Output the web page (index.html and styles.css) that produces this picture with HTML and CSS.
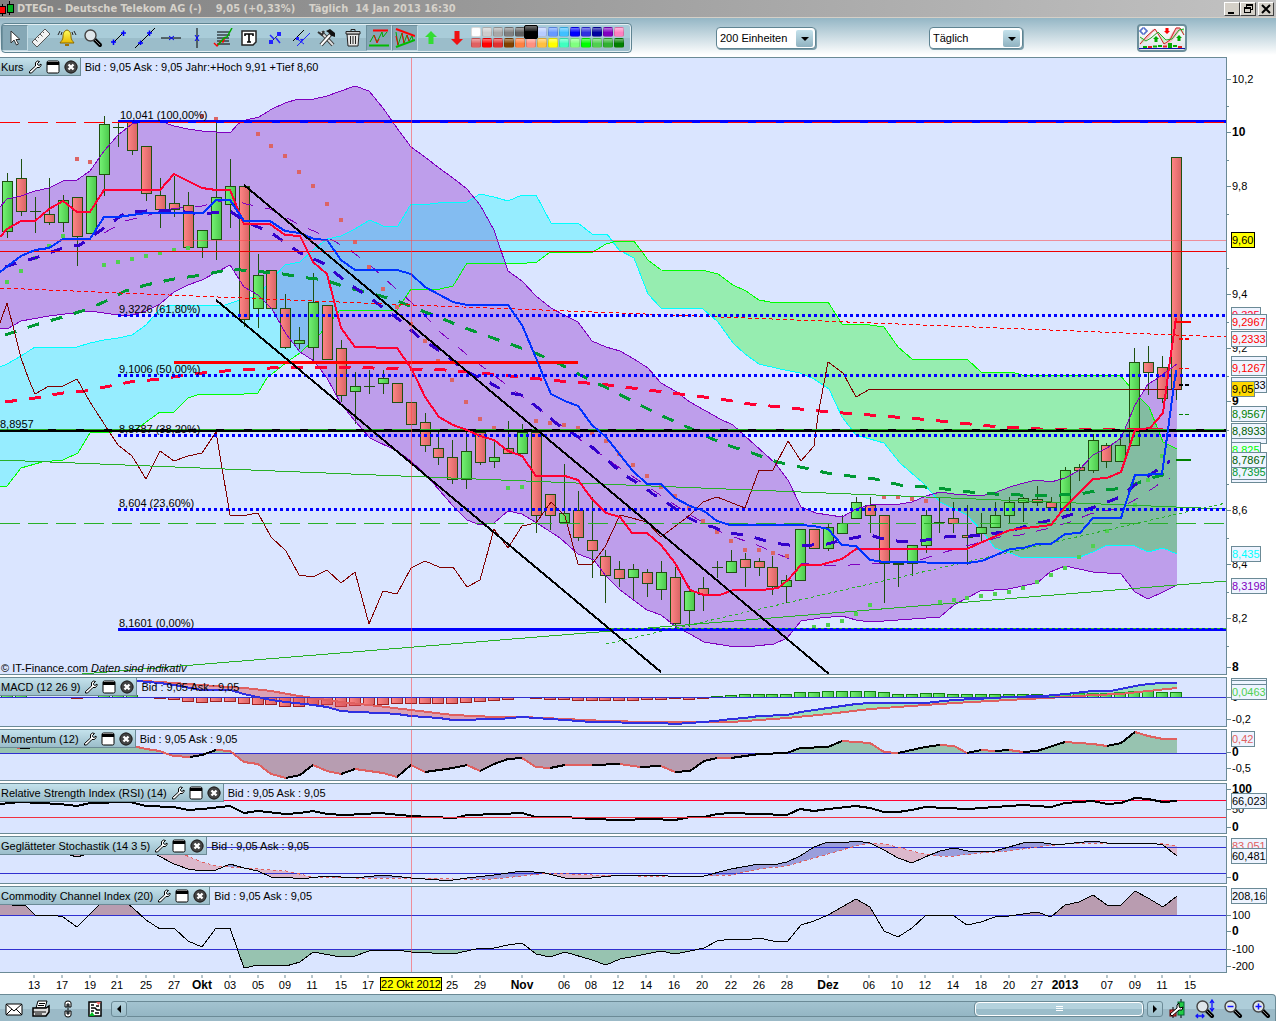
FILE: index.html
```html
<!DOCTYPE html>
<html lang="de">
<head>
    <meta charset="UTF-8">
    <meta name="viewport" content="width=device-width, initial-scale=1.0">
    <title>DTEGn - Deutsche Telekom AG</title>
    <link rel="stylesheet" href="styles.css">
</head>
<body>
    <!-- Shared icons -->
    <svg class="defs" width="0" height="0" aria-hidden="true">
        <defs>
            <linearGradient id="up"><stop offset="0" stop-color="#74f274"/><stop offset="1" stop-color="#4cc84c"/></linearGradient>
            <linearGradient id="down"><stop offset="0" stop-color="#ff8686"/><stop offset="1" stop-color="#d86464"/></linearGradient>
            <linearGradient id="bell" x2="0" y2="1"><stop offset="0" stop-color="#ffff60"/><stop offset="1" stop-color="#e8b800"/></linearGradient>
        </defs>
        <symbol id="i-wrench" viewBox="0 0 14 14">
            <path d="M9.5 1 L7.5 2.5 V6 L1.5 11.5 V13 H3.5 L9 7.5 H11.5 L13 5.5 V4 L11 5.5 L9.5 4.5 L9.5 3.5 L11.5 1.5 Z" fill="#fff" stroke="#000"/>
        </symbol>
        <symbol id="i-window" viewBox="0 0 14 14">
            <rect x="1" y="1" width="12" height="12" rx="1.5" fill="#fff" stroke="#000"/>
            <path d="M1 2 H13 V5 H1 Z" fill="#000"/>
        </symbol>
        <symbol id="i-close" viewBox="0 0 14 14">
            <circle cx="7" cy="7" r="6.5" fill="#444"/>
            <circle cx="7" cy="7" r="6" fill="none" stroke="#222"/>
            <path d="M4.5 4.5 L9.5 9.5 M9.5 4.5 L4.5 9.5" stroke="#fff" stroke-width="2.4"/>
        </symbol>
        <symbol id="i-lens" viewBox="0 0 20 20">
            <path d="M11 11 L17 17" stroke="#000" stroke-width="4" stroke-linecap="round"/>
            <path d="M11 11 L17 17" stroke="#888" stroke-width="1"/>
            <circle cx="7.5" cy="7.5" r="5.5" fill="#dfe6ea" stroke="#444" stroke-width="1.4"/>
        </symbol>
    </svg>

    <header class="titlebar">
        <svg width="14" height="16" viewBox="0 0 14 16" shape-rendering="crispEdges">
            <path d="M2 3 V15 M9 0 V14" stroke="#000"/>
            <rect x="-1" y="5" width="6" height="7" fill="#f00" stroke="#000"/>
            <rect x="7" y="3" width="6" height="8" fill="#00b020" stroke="#000"/>
        </svg>
        <h1>DTEGn - Deutsche Telekom AG (-)    9,05 (+0,33%)    Täglich  14 Jan 2013 16:30</h1>
        <div class="win-buttons">
            <button type="button" aria-label="Minimieren"><svg width="12" height="12"><path d="M2 9 H8 V11 H2 Z"/></svg></button>
            <button type="button" aria-label="Wiederherstellen"><svg width="12" height="12" shape-rendering="crispEdges"><path d="M4 1 H11 V7 H9 V10 H2 V4 H4 Z M5 3 V4 H9 V6 H10 V3 Z M3 6 V9 H8 V6 Z" fill-rule="evenodd"/></svg></button>
            <button type="button" class="win-close" aria-label="Schließen"><svg width="12" height="12"><path d="M2 2 L10 10 M10 2 L2 10" stroke="#000" stroke-width="2"/></svg></button>
        </div>
    </header>

    <nav class="toolbar">
        <div class="tools">
            <button type="button" class="tool active" aria-label="Auswahl"><svg viewBox="0 0 20 20"><path d="M6 3 V15 L9 12 L11.5 17 L13.5 16 L11 11.5 H15 Z" fill="#fff" stroke="#333"/></svg></button>
            <button type="button" class="tool" aria-label="Lineal"><svg viewBox="0 0 20 20"><path d="M1 14 L14 1 L19 6 L6 19 Z" fill="#f2f2f2" stroke="#555"/><path d="M4 11 L6.5 13.5 M6.5 8.5 L8 10 M9 6 L11.5 8.5 M11.5 3.5 L13 5" stroke="#555"/></svg></button>
            <button type="button" class="tool" aria-label="Alarm"><svg viewBox="0 0 20 20"><path d="M10 2 C6.500 3 6 6 6 9 C6 12 4 13 3 15 H17 C16 13 14 12 14 9 C14 6 13.500 3 10 2 Z" fill="url(#bell)" stroke="#8a6a00"/><path d="M8 16 H12 V18 H8 Z" fill="#a07000"/><path d="M3 3 L1 7 M5 4 L4 7 M17 3 L19 7 M15 4 L16 7" stroke="#222"/></svg></button>
            <button type="button" class="tool" aria-label="Lupe"><svg viewBox="0 0 20 20"><use href="#i-lens"/></svg></button>
            <button type="button" class="tool" aria-label="Strecke"><svg viewBox="0 0 20 20"><path d="M5 14 L14 5" stroke="#000"/><path d="M2 14 H7 M4.500 11.500 V17 M12 5 H17 M14.500 2.500 V8" stroke="#00f" stroke-width="1.500"/></svg></button>
            <button type="button" class="tool" aria-label="Linie"><svg viewBox="0 0 20 20"><path d="M0 20 L20 0" stroke="#000"/><path d="M3 15 H8 M5.500 12.500 V17 M12 5 H17 M14.500 2.500 V8" stroke="#00f" stroke-width="1.500"/></svg></button>
            <button type="button" class="tool" aria-label="Horizontale"><svg viewBox="0 0 20 20"><path d="M0 10 H20" stroke="#000"/><path d="M8 8 L13 12 M13 8 L8 12" stroke="#00f"/></svg></button>
            <button type="button" class="tool" aria-label="Vertikale"><svg viewBox="0 0 20 20"><path d="M10 0 V20" stroke="#000"/><path d="M8 7 L12 13 M12 7 L8 13" stroke="#00f"/></svg></button>
            <button type="button" class="tool" aria-label="Fibonacci"><svg viewBox="0 0 20 20"><path d="M4 4 H17 M4 7 H17 M4 10 H16 M4 13 H16 M4 16 H17" stroke="#000"/><path d="M1 15 L4 18 L8 13 L10 14 L12 9" stroke="#f00" stroke-width="1.500" fill="none"/><path d="M5 17 L11 10 L14 9 L19 0" stroke="#0a0" stroke-width="1.500" fill="none"/></svg></button>
            <button type="button" class="tool" aria-label="Text"><svg viewBox="0 0 20 20"><path d="M3 3 H17 V14 L14 17 H3 Z" fill="#fff" stroke="#222" stroke-width="1.500"/><path d="M6 8 V6 H14 V8 M10 6 V14 M8 14 H12" stroke="#000" stroke-width="1.600" fill="none"/></svg></button>
            <button type="button" class="tool" aria-label="Verschieben"><svg viewBox="0 0 20 20"><path d="M6 14 L14 6" stroke="#000" stroke-dasharray="2 1"/><path d="M12 4 H16 V8 H12 Z M4 12 H8 V16 H4 Z" fill="#22f"/><path d="M5 7 L9 11 M11 10 L15 15" stroke="#22f" stroke-width="1.500"/></svg></button>
            <button type="button" class="tool" aria-label="Parallele"><svg viewBox="0 0 20 20"><path d="M2 13 L13 2" stroke="#000"/><path d="M6 18 L19 5 M5 10 L13 16" stroke="#22f"/><path d="M9 11 L13 11 L11 14 Z M5 9 h3 v3 h-3 Z" fill="#22f"/></svg></button>
            <button type="button" class="tool" aria-label="Werkzeuge"><svg viewBox="0 0 20 20"><path d="M4 4 L16 17" stroke="#333" stroke-width="4"/><path d="M4 4 L16 17" stroke="#ddd" stroke-width="2"/><path d="M1 4 L5 7 L7 3" stroke="#333" stroke-width="2" fill="none"/><path d="M14 6 L4 17" stroke="#333" stroke-width="4"/><path d="M13 7 L4 17" stroke="#fff" stroke-width="2"/><path d="M9 3 L13 1 L18 5 L18 9 L15 8 L12 5 Z" fill="#111"/></svg></button>
            <button type="button" class="tool" aria-label="Löschen"><svg viewBox="0 0 20 20"><path d="M4 6 H16 L15 18 H5 Z" fill="#e8e8e8" stroke="#222"/><path d="M3 3.500 H17 V6 H3 Z" fill="#ccc" stroke="#222"/><path d="M8 3 V1.500 H12 V3 M7.500 8 V16 M10 8 V16 M12.500 8 V16" stroke="#222" fill="none"/></svg></button>
            <button type="button" class="tool active" aria-label="Widerstand"><svg viewBox="0 0 20 20"><path d="M4 2.500 H19" stroke="#f00" stroke-width="2"/><path d="M0 17.500 H20" stroke="#0b0" stroke-width="2"/><path d="M1 14 L5 7 L8 14 L13 4 L14 9 L18 4" stroke="#0a0" fill="none"/><path d="M5 7 L8 15 L10 11" stroke="#e00" fill="none"/></svg></button>
            <button type="button" class="tool active" aria-label="Dreieck"><svg viewBox="0 0 20 20"><path d="M1 1 L20 8" stroke="#f00" stroke-width="2"/><path d="M1 19 L20 12" stroke="#0b0" stroke-width="2"/><path d="M1 4 L3 17 L7 5 L9 15 L12 7 L14 13 L17 8 L18 12" stroke="#0a0" fill="none"/><path d="M1 8 L3 17 M7 5 L9 15 M12 7 L14 13" stroke="#e00"/></svg></button>
            <button type="button" class="tool" aria-label="Kauf"><svg viewBox="0 0 20 20"><path d="M10 3 L16 9 H12.500 V16 H7.500 V9 H4 Z" fill="#3d3"/></svg></button>
            <button type="button" class="tool" aria-label="Verkauf"><svg viewBox="0 0 20 20"><path d="M10 17 L16 11 H12.500 V3 H7.500 V11 H4 Z" fill="#f01010"/></svg></button>
            <div class="palette" id="palette"></div>
        </div>
        <label class="select units"><span class="sr">Einheiten</span>
            <select><option>200 Einheiten</option></select>
            <svg width="17" height="17"><path d="M5 7 H13 L9 11 Z"/></svg>
        </label>
        <label class="select period"><span class="sr">Zeitraum</span>
            <select><option>Täglich</option></select>
            <svg width="17" height="17"><path d="M5 7 H13 L9 11 Z"/></svg>
        </label>
        <button type="button" class="indicator-btn" aria-label="Indikator hinzufügen">
            <svg width="46" height="24" viewBox="0 0 46 24">
                <path d="M1 18 L8 10 L14 3 L18 5 L14 6 L8 14 L1 19 Z M22 12 L27 18 L33 7 L38 1 L42 3 L38 9 L33 15 L27 20 Z" fill="#f3c0c4"/>
                <path d="M18 6 L27 14 L25 18 Z M1 11 L7 15 L3 17 Z M40 4 L45 3 V9 Z" fill="#c6efc6"/>
                <path d="M1 18 L8 10 L16 3 L21 11 L25 18 L31 14 L37 2 L41 2 L45 9" fill="none" stroke="#c22"/>
                <path d="M1 11 L7 15 L12 12 L19 6 L27 14 L33 13 L40 4 L45 3" fill="none" stroke="#2a2"/>
                <path d="M3 2 H6 V4 H8 V6 H6 V8 H3 V6 H1 V4 H3 Z" fill="#fff" stroke="#24b"/>
                <path d="M17 10 L20 13 H18.500 V16 H15.500 V13 H14 Z M40 9 L43 12 H41.500 V15 H38.500 V12 H37 Z" fill="#0a0"/>
                <path d="M28 8 L31 5 H29.500 V2 H26.500 V5 H25 Z" fill="#f00"/>
                <path d="M4 21 H8 M14 20.500 H18 M19 20 H23 M34 20 H38" stroke="#0a0" stroke-width="2"/>
                <path d="M29 19.500 H33" stroke="#0a0" stroke-width="5"/>
                <path d="M9 21 H13 M24 20.500 H28 M39 21 H43" stroke="#d22" stroke-width="2"/>
                <path d="M0 22.500 H46" stroke="#11a" stroke-width="1"/>
            </svg>
        </button>
    </nav>

    <main id="charts"></main>

    <div class="row dates">
        <svg id="dates" class="plot-dates"></svg>
        <div class="axis"></div>
    </div>

    <footer class="statusbar">
        <button type="button" aria-label="Mail"><svg viewBox="0 0 20 20"><rect x="2" y="5" width="16" height="11" rx="1" fill="#fff" stroke="#000"/><path d="M2 5 L10 12 L18 5 M2 16 L8 10 M18 16 L12 10" fill="none" stroke="#000"/></svg></button>
        <button type="button" aria-label="Drucken"><svg viewBox="0 0 20 20"><path d="M7 2 H16 L14 9 H5 Z" fill="#fff" stroke="#000"/><path d="M2 9 H15 L18 7 V13 L15 17 H2 Z" fill="#ddd" stroke="#000" stroke-width="1.500"/><path d="M2 13 H15 M8 4.500 H14 M7 6.500 H13 M4 15 H11" stroke="#000"/></svg></button>
        <button type="button" aria-label="Verknüpfen"><svg viewBox="0 0 20 20"><path d="M7 8 V4 Q7 2 10 2 Q13 2 13 4 V8 H11 V5 H9 V8 Z M7 12 V16 Q7 18 10 18 Q13 18 13 16 V12 H11 V15 H9 V12 Z" fill="#fff" stroke="#000"/><path d="M10 6 V14" stroke="#000"/></svg></button>
        <button type="button" aria-label="Liste"><svg viewBox="0 0 20 20"><rect x="4" y="3" width="12" height="14" fill="#fff" stroke="#000" stroke-width="1.500"/><path d="M6 6 H9 M6 9 H10 L12 11 H15 M11 7 H14 M6 12 H9 M10 14 H14" stroke="#000" stroke-width="1.500" fill="none"/><path d="M11 3 H16 L13.500 6 Z" fill="#e66"/><path d="M4 17 H10 L7 13 Z" fill="#0b2"/></svg></button>
        <button type="button" class="scroll-btn first" aria-label="Zurück"><svg viewBox="0 0 12 12"><path d="M8 2 V10 L4 6 Z"/></svg></button>
        <div class="track"><div class="thumb"><i></i></div></div>
        <button type="button" class="scroll-btn" aria-label="Vor"><svg viewBox="0 0 12 12"><path d="M4 2 V10 L8 6 Z"/></svg></button>
        <div class="zoom-tools">
            <button type="button" aria-label="Einstellungen"><svg viewBox="0 0 20 20"><path d="M6 8 V19 M14 0 V19" stroke="#000"/><rect x="3" y="11" width="6" height="6" fill="#e44" stroke="#600"/><rect x="11" y="3" width="6" height="13" fill="#2c4" stroke="#063"/><path d="M12 4 L10 6 V9 L3 15 L5 17 L12 11 H15 L16 8 L13 9 L12 7 Z" fill="#fff" stroke="#000"/></svg></button>
            <button type="button" aria-label="Zoom anpassen"><svg viewBox="0 0 20 20"><use href="#i-lens"/><path d="M17 2 V11 M15 4 L17 1 L19 4 M15 9 L17 12 L19 9 M1 17 H9 M3 15 L1 17 L3 19 M7 15 L9 17 L7 19" stroke="#11f" fill="none" stroke-width="1.300"/></svg></button>
            <button type="button" aria-label="Verkleinern"><svg viewBox="0 0 20 20"><use href="#i-lens"/><path d="M4.500 7.500 H10.500" stroke="#11f" stroke-width="1.500"/></svg></button>
            <button type="button" aria-label="Vergrößern"><svg viewBox="0 0 20 20"><use href="#i-lens"/><path d="M4.500 7.500 H10.500 M7.500 4.500 V10.500" stroke="#11f" stroke-width="1.500"/></svg></button>
        </div>
    </footer>

    <script src="chart.js"></script>
</body>
</html>
```
FILE: styles.css
```css
* {
    box-sizing: border-box;
}

body {
    margin: 0;
    background: #fff;
    color: #000;
    font-family: "Liberation Sans", Arial, sans-serif;
    font-size: 11px;
    min-height: 100vh;
    display: flex;
    flex-direction: column;
}

button {
    padding: 0;
    border: 0;
    background: none;
    display: flex;
    align-items: center;
    justify-content: center;
}

.defs {
    position: absolute;
}

.sr {
    position: absolute;
    width: 1px;
    height: 1px;
    overflow: hidden;
    clip-path: inset(50%);
    white-space: nowrap;
}

/* Title bar */
.titlebar {
    height: 18px;
    display: flex;
    align-items: center;
    gap: 3px;
    background: linear-gradient(90deg, #808080, #c2c2c2);
    border-bottom: 1px solid #d4d0c8;
}

.titlebar h1 {
    flex: 1;
    margin: 0;
    font: bold 11px "DejaVu Sans Condensed", "DejaVu Sans", sans-serif;
    color: #d6d2ca;
    white-space: pre;
}

.win-buttons {
    display: flex;
    padding-right: 2px;
}

.win-buttons button {
    width: 16px;
    height: 14px;
    background: #d4d0c8;
    border: 1px solid;
    border-color: #fff #404040 #404040 #fff;
}

.win-buttons .win-close {
    margin-left: 2px;
}

/* Toolbar */
.toolbar {
    height: 39px;
    display: flex;
    align-items: center;
    padding: 0 0 0 1px;
    background: linear-gradient(#94b6c5, #fff 95%);
}

.tools {
    display: flex;
    align-items: center;
    height: 30px;
    width: 631px;
    border: 1px solid #5f8492;
    border-radius: 4px;
    box-shadow: inset 0 0 0 1px #e4eff3;
    background: linear-gradient(#a9ccd9 50%, #9bbdca 50%);
}

.tool {
    width: 26px;
    height: 26px;
}

.tool svg {
    width: 20px;
    height: 20px;
}

.tool.active {
    background: #86a8b6;
    border: 1px solid;
    border-color: #6d909e #c3dbe4 #c3dbe4 #6d909e;
}

.palette {
    display: grid;
    grid-template-columns: repeat(14, 11px);
    grid-auto-rows: 11px;
    margin-left: 1px;
}

.palette button {
    width: 10px;
    height: 10px;
    border-radius: 2px;
    background-image: linear-gradient(rgba(255, 255, 255, .45), rgba(255, 255, 255, .1) 45%, transparent 46%);
    border: 1px solid rgba(0, 0, 0, .15);
}

.palette .selected {
    width: 14px;
    height: 14px;
    margin: -2px;
    border-color: #000;
    z-index: 1;
}

.select {
    position: relative;
    display: flex;
}

.select select {
    appearance: none;
    width: 100px;
    height: 22px;
    padding: 0 20px 0 3px;
    font: 11px/18px "Liberation Sans", Arial, sans-serif;
    color: #000;
    background: #fff;
    border: 1px solid #5f8492;
    border-radius: 4px;
    box-shadow: 1px 1px 0 #7fa0ad;
}

.select svg {
    position: absolute;
    right: 3px;
    top: 3px;
    border-radius: 2px;
    background: linear-gradient(#c5e2ec, #8fb2c0);
    pointer-events: none;
}

.units {
    margin-left: 84px;
}

.period {
    margin-left: 113px;
}

.period select {
    width: 94px;
}

.indicator-btn {
    margin-left: 114px;
    width: 50px;
    height: 28px;
    border: 2px solid #6c8f9c;
    border-radius: 4px;
    background: linear-gradient(#fff, #dde4e8);
}

/* Chart rows: plot on the left, price scale on the right */
.row {
    display: flex;
    margin-bottom: 2px;
}

.plot {
    position: relative;
    flex: 1;
    border: solid #6b8a96;
    border-width: 1px 1px 1px 0;
    background: #dae5ff;
}

.plot svg {
    display: block;
    width: 100%;
}

.plot .canvas,
.plot .labels {
    height: 100%;
}

.plot .labels {
    position: absolute;
    inset: 0;
}

.kurs { height: 618px; }
.macd { height: 50px; }
.momentum { height: 52px; }
.rsi { height: 51px; }
.stochastik { height: 48px; }
.cci { height: 87px; }

.axis {
    width: 49px;
}

.axis svg {
    display: block;
    overflow: visible;
}

.panel-head {
    position: absolute;
    left: 0;
    top: 0;
    display: flex;
    align-items: center;
    white-space: pre;
}

.panel-title {
    display: flex;
    align-items: center;
    gap: 4px;
    height: 18px;
    padding: 0 2px 0 1px;
    border: solid #6b8a96;
    border-width: 0 1px 1px 0;
    background: linear-gradient(#c4e2ec, #9bbdca);
}

.panel-title h2 {
    margin: 0;
    font-size: 11px;
    font-weight: normal;
}

.panel-title svg {
    width: 14px;
    height: 14px;
}

.quote {
    padding-left: 4px;
}

text {
    font-size: 11px;
}

.b {
    font-weight: bold;
    font-size: 12px;
}

.dates {
    height: 19px;
    margin: 0;
}

.plot-dates {
    flex: 1;
    height: 19px;
    overflow: visible;
}

/* Bottom bar */
.statusbar {
    flex: 1;
    min-height: 28px;
    display: flex;
    align-items: center;
    border-top: 1px solid #6b8a96;
    border-right: 1px solid #6b8a96;
    border-top-right-radius: 4px;
    background: linear-gradient(#aecdd9 50%, #9bbac7 50%);
}

.statusbar button {
    width: 27px;
    height: 20px;
}

.statusbar button svg {
    width: 20px;
    height: 20px;
}

.statusbar .scroll-btn {
    width: 16px;
    height: 16px;
    border: 1px solid #6b8a96;
    border-radius: 3px;
    background: linear-gradient(#b4d2dd, #9bbdca);
}

.statusbar .first {
    margin-left: 3px;
}

.statusbar .scroll-btn svg {
    width: 12px;
    height: 12px;
}

.track {
    flex: 1;
    display: flex;
    justify-content: flex-end;
    height: 16px;
    margin-right: 4px;
    border: solid #6b8a96;
    border-width: 1px 0;
    background: linear-gradient(#a3c3d0, #94b6c4);
}

.thumb {
    width: 168px;
    display: flex;
    align-items: center;
    justify-content: center;
    border: 1px solid #fff;
    border-radius: 4px;
    background: linear-gradient(#b4d2dd 50%, #9bbdca 50%);
    box-shadow: 0 0 0 1px #6b8a96;
}

.thumb i {
    width: 7px;
    height: 5px;
    border: solid #fff;
    border-width: 1px 0;
    background: linear-gradient(transparent 1px, #fff 1px, #fff 2px, transparent 2px);
}

.zoom-tools {
    display: flex;
}

.zoom-tools button {
    width: 28px;
}
```
FILE: chart.js
```js
const PLOT_W = 1226;

// x position of bar number i
function barX(i) {
    return Math.round(7.5 + i * 13.917 - 0.5);
}

// "x,y x,y ..." -> [[x, y], ...]
function pts(str) {
    return str.trim().split(/\s+/).map(p => p.split(',').map(Number));
}

function yAt(points, x) {
    for (let i = 1; i < points.length; i++) {
        const [x0, y0] = points[i - 1];
        const [x1, y1] = points[i];
        if (x >= x0 && x <= x1) return y0 + (y1 - y0) * (x - x0) / (x1 - x0 || 1);
    }
    return null;
}

function line(str, color, width = 1, dash = '') {
    return `<polyline points="${str}" fill="none" stroke="${color}" stroke-width="${width}" stroke-dasharray="${dash}"/>`;
}

function hline(y, color, width = 1, dash = '', x0 = 0, x1 = PLOT_W) {
    const o = width % 2 ? 0.5 : 0;
    return line(`${x0},${y + o} ${x1},${y + o}`, color, width, dash);
}

// Fill between two curves, one colour where a is above b and another where it is below
function between(aStr, bStr, above, below) {
    const a = pts(aStr);
    const b = typeof bStr === 'number' ? [[0, bStr], [PLOT_W, bStr]] : pts(bStr);
    let up = '';
    let dn = '';
    for (let x = a[0][0]; x < a[a.length - 1][0]; x++) {
        const ya = yAt(a, x + 0.5);
        const yb = yAt(b, x + 0.5);
        if (ya === null || yb === null) continue;
        const d = `M${x + 0.5} ${ya.toFixed(1)}V${yb.toFixed(1)}`;
        if (ya < yb) up += d; else dn += d;
    }
    return `<path d="${up}" stroke="${above}"/><path d="${dn}" stroke="${below}"/>`;
}

function dots(str, color) {
    return pts(str).map(([x, y]) => `<rect x="${x - 2}" y="${y - 2}" width="4" height="4" fill="${color}"/>`).join('');
}

// high, body top, body bottom, low; r = falling
const candles = `173,181,231,238,g 159,178,211,216,r 197,211,211,233,g 178,214,222,225,r 195,200,222,232,g
197,197,236,266,r 176,176,233,233,g 116,124,174,196,g 122,127,127,147,g 122,122,150,155,r
146,146,193,201,r 178,195,209,228,r 176,203,209,217,r 192,205,247,247,r 230,230,247,258,g
122,197,239,260,g 159,186,204,228,g 186,186,319,327,r 254,275,308,328,g 270,270,308,308,r
294,308,347,349,r 327,340,343,349,g 273,302,347,364,g 305,305,359,359,r 340,348,395,402,r
372,386,391,424,g 370,386,386,394,g 370,378,383,394,g 383,383,402,402,r 402,402,424,424,r
413,422,445,452,r 432,448,457,465,r 440,457,479,484,r 432,451,479,489,g 432,432,462,465,r
442,457,461,468,g 421,448,453,453,r 424,432,453,453,g 432,432,515,533,r 494,494,515,530,r
464,513,522,522,g 491,510,537,541,r 497,540,550,578,r 550,556,575,603,r 561,569,578,587,r
564,569,577,600,g 569,572,583,597,r 561,572,589,600,g 567,577,623,628,r 586,591,610,627,g
577,588,594,611,r 561,567,567,578,g 550,561,572,572,g 553,559,567,587,r 558,561,567,576,r
556,567,586,595,r 575,580,586,603,g 529,529,580,580,g 529,529,548,548,r 524,527,548,551,g
515,523,533,533,g 497,502,518,518,g 497,505,515,533,r 515,515,563,603,r 562,563,564,587,g
545,545,563,576,g 510,515,545,553,g 497,522,522,533,g 502,518,523,533,r 505,535,537,565,r
513,527,533,541,g 502,515,527,527,g 497,502,515,523,g 497,498,502,522,g 486,499,502,506,r
497,502,507,508,r 467,470,510,510,g 464,467,470,481,r 434,440,470,473,g 443,445,461,468,r
437,445,461,461,g 348,362,445,445,g 346,362,372,395,r 356,367,398,403,r 157,157,389,400,r`;

function drawCandles() {
    return candles.split(/\s+/).map((c, i) => {
        const [h, t, b, l, dir] = c.split(',');
        const x = barX(i);
        const wick = `<path d="M${x + 0.5} ${h}V${l}" stroke="#1f5010"/>`;
        if (t === b) return wick + `<path d="M${x - 5} ${+t + 0.5}H${x + 6}" stroke="#1f5010"/>`;
        return wick + `<rect x="${x - 4.5}" y="${+t + 0.5}" width="10" height="${b - t}" fill="url(#${dir === 'g' ? 'up' : 'down'})" stroke="#1f5010"/>`;
    }).join('');
}

const bbUp = '0,207 7,199 21,196 35,191 49,188 63,181 77,180 90,171 104,151 118,135 132,124 146,121 160,121 174,126 188,129 202,131 216,132 230,133 238,124 246,120 259,117 272,109 285,103 298,99 314,99 327,96 341,91 355,86 369,91 383,108 397,128 411,147 425,157 439,168 453,178 467,189 480,205 494,230 508,271 522,281 536,296 551,308 564,315 578,322 592,341 606,347 620,351 634,359 648,368 661,383 675,391 690,402 720,419 733,425 755,445 775,463 788,480 801,507 816,513 842,517 856,509 870,505 900,504 912,502 926,496 940,492 954,494 980,496 994,493 1010,487 1020,484 1036,480 1051,482 1065,478 1078,471 1093,455 1107,448 1121,438 1130,417 1135,405 1148,384 1155,380 1177,364';
const bbLow = '0,328 7,329 21,321 49,316 90,311 118,315 132,315 146,311 160,304 174,292 188,285 202,280 230,265 244,287 258,295 272,309 286,334 300,352 314,361 327,378 341,404 355,421 370,438 397,451 411,461 428,477 440,491 453,506 467,520 480,525 494,523 508,511 522,514 540,525 560,538 578,554 594,560 605,575 620,590 647,610 661,615 675,626 690,634 704,642 729,646 755,646 774,644 787,638 801,621 820,618 842,616 856,620 870,622 940,617 954,605 980,591 1008,589 1037,583 1050,572 1065,566 1093,572 1121,574 1135,592 1148,599 1163,592 1177,585';
const spanA = '0,367 7,364 21,356 35,347 77,347 90,343 104,340 118,338 132,335 146,325 160,309 170,305 225,305 240,300 258,296 270,281 285,265 300,262 314,249 327,239 341,236 355,229 370,220 383,226 398,226 411,204 430,204 446,202 467,202 480,194 494,197 508,201 522,195 536,195 551,223 578,223 592,234 607,234 619,250 634,258 648,294 661,308 703,309 718,322 733,343 745,354 759,364 780,369 800,373 814,379 829,389 842,417 856,435 870,439 884,443 900,463 923,483 940,502 967,515 982,531 995,548 1010,553 1023,558 1080,557 1093,552 1107,545 1135,546 1148,552 1163,548 1177,554';
const spanB = '0,486 7,486 21,468 42,462 63,460 78,453 90,433 134,431 142,425 160,412 174,412 188,398 200,394 244,394 258,393 267,378 287,362 300,353 320,334 340,310 397,310 411,289 440,289 453,286 467,263 527,263 537,262 550,252 593,252 606,244 617,241 634,241 648,260 661,270 706,271 718,274 733,285 746,291 759,300 770,302 828,302 842,324 870,325 884,327 898,347 912,359 967,359 981,372 1015,373 1022,375 1120,375 1135,393 1149,407 1155,422 1163,442 1177,449';
const tenkan = '0,237 7,229 21,221 35,221 49,209 63,201 77,212 90,212 104,190 160,190 174,174 202,188 216,190 230,190 244,224 270,224 285,235 300,236 313,262 327,274 341,328 355,347 397,348 411,368 417,380 425,397 439,417 453,425 467,430 480,436 494,440 508,451 522,456 536,476 565,476 578,480 592,499 606,513 620,517 632,533 647,533 661,545 675,563 690,590 704,595 720,595 733,590 762,590 778,588 788,580 801,565 820,565 842,559 856,549 967,549 980,543 1010,530 1051,525 1065,507 1093,479 1107,478 1121,472 1135,430 1150,428 1163,413 1168,375 1176,318';
const kijun = '0,272 21,256 35,250 49,248 63,239 90,239 104,217 118,217 146,213 203,213 216,200 230,200 244,221 270,221 285,231 300,233 314,239 327,240 341,260 355,270 397,270 411,274 425,287 453,302 467,305 508,305 522,325 536,358 545,380 551,394 565,401 578,406 592,425 606,437 632,470 647,484 661,484 675,498 690,506 704,511 717,521 730,525 800,525 814,526 828,529 842,545 856,546 870,560 885,562 967,563 982,561 1010,549 1023,548 1037,544 1051,544 1065,534 1080,533 1093,518 1121,518 1135,475 1162,474 1176,370';
const chikou = '0,323 7,303 14,330 21,358 29,380 35,394 49,386 63,386 77,379 90,402 110,433 118,445 132,456 146,479 160,451 174,461 188,456 202,453 216,432 230,515 247,515 258,513 271,537 286,551 299,575 313,577 327,570 341,583 355,572 369,624 383,591 397,594 411,568 425,561 439,567 453,567 467,587 480,580 494,529 508,548 522,526 536,503 551,502 565,516 578,564 592,564 605,547 620,515 647,522 661,537 690,515 703,502 717,497 745,508 759,470 773,470 788,441 801,461 814,446 818,415 828,362 843,373 856,397 870,389 1181,389'.replace('536,503', '536,523');
const ema = '5,267 14,264 35,258 63,248 80,245 104,228 125,213 146,211 167,210 202,214 230,211 246,222 270,232 300,253 325,264 345,281 370,298 397,318 420,338 443,353 465,371 485,380 497,387 509,393 521,395 533,404 545,413 557,424 582,439 593,448 606,459 615,467 629,478 641,485 653,494 665,501 678,511 687,517 701,524 713,527 725,532 749,536 773,543 797,546 827,544 847,539 870,535 880,538 897,541 920,541 945,537 970,536 990,534 1010,531 1030,525 1060,518 1080,512 1100,505 1120,497 1135,485 1150,475 1170,461';
const bbMid = '104,233 125,221 146,216 167,209 202,206 230,199 246,204 270,209 300,225 325,236 350,250 370,265 395,288 420,310 440,332 465,353 480,365 590,447 620,468 690,515 725,534 757,545 780,555 800,563 828,566 850,565 880,563 920,560 945,552 970,545 1000,537 1020,535 1050,528 1070,522 1090,514 1120,508 1140,497 1165,480 1170,478';
const smaGreen = '5,335 35,325 63,317 85,310 104,302 125,291 146,285 174,279 202,275 232,269 250,271 277,273 300,277 325,280 345,287 370,293 395,300 420,310 443,319 465,328 490,337 510,344 535,353 560,364 580,375 605,387 640,405 660,415 685,426 710,438 730,446 755,454 777,462 805,468 827,473 850,476 875,479 900,485 925,487 945,489 970,492 995,494 1020,495 1060,495 1080,494 1095,491 1115,489 1135,484 1155,477 1170,473';
const smaRed = '5,402 35,398 63,393 85,391 105,387 130,382 160,379 180,376 202,373 225,371 270,368 300,367 345,367 400,369 445,370 490,374 530,378 560,381 600,384 640,389 680,394 720,399 750,404 790,408 830,412 870,415 920,419 960,423 1000,427 1040,429 1100,430 1170,429';
const sarHigh = '77,159 90,162 202,116 216,119 258,134 271,146 285,156 299,172 313,186 327,204 341,220 355,242 369,267 383,289 397,307 411,324 425,341 438,361 452,380 466,402 480,419 494,428 536,421 550,423 564,425 578,428 592,433 606,441 619,454 633,465 647,476 661,487 675,496 689,508 703,521 717,532 731,541 745,550 759,550 773,553 787,556 884,497 898,497 912,499 926,501';
const sarLow = '7,282 21,271 35,258 49,246 63,236 104,265 118,262 132,259 146,256 160,253 174,250 188,248 508,488 522,487 814,627 828,625 842,621 856,614 870,605 940,602 954,600 967,598 981,596 995,594 1009,592 1023,588 1037,582 1051,575 1065,568 1079,557 1093,546 1107,531 1135,505 1148,480 1162,456';

const GREEN = '#28b028';
const CURSOR = 'rgba(255,70,70,.55)';

function drawKurs() {
    return between(bbUp, bbLow, 'rgba(128,0,192,.31)', 'none')
        + between(spanA, spanB, 'rgba(0,255,255,.31)', 'rgba(0,255,0,.31)')
        + line(spanA, '#00ffff') + line(spanB, '#00ff00')
        + drawCandles()
        + line(bbUp, '#8000c0') + line(bbLow, '#8000c0')
        + line(bbMid, '#8000c0', 1, '12 12')
        + dots(sarHigh, '#dc6464') + dots(sarLow, '#50d050')
        + line(smaRed, '#ff0033', 3, '12 12') + line(smaGreen, '#009933', 3, '12 12')
        + line(ema, '#3300cc', 3, '12 12')
        + line(chikou, '#800000')
        + hline(251, '#ee0000')
        + line('0,288 411,305 620,313 1226,337', '#ff0000', 1, '4 3')
        + line('0,460 1226,509', GREEN) + line('82,674 1226,581', GREEN)
        + line('606,644 1226,503', GREEN, 1, '3 3')
        + hline(523, GREEN, 1, '20 8')
        + hline(315, '#0000ff', 3, '3 3', 118) + hline(375, '#0000ff', 3, '3 3', 118)
        + hline(435, '#0000ff', 3, '3 3', 118) + hline(509, '#0000ff', 3, '3 3', 118)
        + hline(362, '#ff0000', 3, '', 174, 578)
        + hline(121, '#0000ff', 3, '', 118) + hline(122, '#ff0000', 1, '20 8')
        + hline(430, '#000000', 3) + hline(429, GREEN, 1, '20 8')
        + hline(629, '#0000ff', 3, '', 118) + hline(628, GREEN, 1, '3 3', 605)
        + line(tenkan, '#ff0033', 2) + line(kijun, '#0033ff', 2)
        + line('244,185 829,674', '#000', 2) + line('216,300 661,672', '#000', 2)
        + hline(322, '#ff0000', 2, '', 1176, 1191) + hline(339, '#ff0000', 2, '4 2', 1179, 1189)
        + hline(368, '#ff0000', 1, '4 2', 1179, 1189) + hline(385, '#000', 2, '4 2', 1179, 1189)
        + hline(414, '#008000', 1, '4 2', 1179, 1190) + hline(460, '#008000', 2, '', 1176, 1191)
        + hline(240, CURSOR);
}

const macd = '0,680 137,681 160,683 174,685 202,690 230,690 244,694 271,700 286,702 313,705 327,707 341,711 355,712 383,713 397,714 411,716 439,718 453,720 500,719 522,717 536,718 565,720 592,722 650,723 661,723 675,724 690,723 715,721 731,719 745,718 759,716 787,715 801,712 828,708 856,704 870,703 925,703 954,700 995,698 1008,697 1044,696 1065,694 1093,691 1110,691 1121,689 1135,686 1148,684 1163,683 1177,683';
const signal = '0,679 145,681 174,683 216,686 244,688 271,691 299,696 313,698 341,702 369,705 411,710 453,715 495,717 522,717 565,719 606,721 650,722 731,722 745,721 787,718 828,714 870,709 925,705 954,703 1008,700 1065,697 1093,695 1121,694 1148,691 1177,688';
// histogram heights, negative = below the zero line
const hist = [2, 2, 0, 0, 0, -1, 0, 2, 2, 2, 0, -1, -2, -4, -5, -4, -4, -6, -7, -7, -9, -9, -7, -7, -9, -8, -7, -7, -6, -6, -6, -6, -6, -5, -4, -3, -2, 0, -1, -2, -2, -3, -3, -3, -3, -3, -2, -2, -1, -2, -1, 1, 2, 3, 3, 3, 3, 5, 5, 6, 6, 6, 6, 5, 3, 3, 4, 4, 3, 3, 3, 3, 3, 3, 3, 2, 3, 4, 4, 4, 5, 6, 6, 5, 5];

function drawMacd() {
    const bars = hist.map((h, i) => {
        if (!h) return '';
        const x = barX(i) - 5.5;
        return h > 0
            ? `<rect x="${x}" y="${697.5 - h}" width="11" height="${h}" fill="url(#up)" stroke="#108010"/>`
            : `<rect x="${x}" y="697.5" width="11" height="${-h}" fill="url(#down)" stroke="#a02020"/>`;
    }).join('');
    return bars + between(macd, signal, 'rgba(60,220,90,.4)', 'rgba(220,80,90,.45)')
        + line(signal, '#e06060', 2) + line(macd, '#3030e0', 2) + hline(697, '#3030d0');
}

const momentum = '0,744 20,748 40,747 60,744 133,746 146,749 160,751 167,754 174,756 190,757 202,755 216,750 230,751 244,762 258,764 271,774 286,778 300,775 313,765 327,771 341,774 355,769 369,771 383,773 397,777 411,765 425,772 453,768 467,765 480,771 494,764 508,759 522,758 536,767 550,768 565,765 592,765 620,764 640,767 661,766 675,772 690,771 704,761 717,758 731,758 759,754 787,753 800,748 828,747 842,741 870,743 884,752 898,753 925,747 940,745 954,746 967,753 981,750 995,751 1009,750 1023,752 1037,751 1065,742 1079,743 1093,744 1107,746 1121,743 1135,732 1148,736 1163,739 1177,739';

function drawMomentum() {
    const p = pts(momentum);
    let out = between(momentum, 753, '#97c3b0', '#b79db1') + hline(753, '#3030d0');
    // rising parts black, falling parts red
    for (let i = 1; i < p.length; i++) {
        out += line(`${p[i - 1]} ${p[i]}`, p[i][1] < p[i - 1][1] ? '#000' : '#e06060', 2);
    }
    return out;
}

const rsi = '0,804 20,802 60,804 77,806 90,803 130,802 146,806 174,807 188,810 202,809 230,806 244,813 258,811 286,814 300,813 313,811 327,814 345,815 380,813 400,815 411,816 430,817 455,818 467,815 500,814 522,813 536,817 565,817 592,819 620,820 650,819 675,820 690,817 704,817 717,814 731,813 787,815 800,809 814,811 828,809 856,806 870,808 884,812 898,812 912,810 925,807 968,809 995,807 1023,805 1051,807 1065,803 1093,801 1107,804 1121,803 1135,798 1148,799 1163,802 1177,801';

function drawRsi() {
    return hline(800, '#ff0033') + line(rsi, '#000', 2) + hline(817, '#f03040');
}

const stoK = '0,845 60,850 70,855 77,857 84,855 110,848 157,855 174,864 188,869 202,871 216,870 230,864 244,868 258,871 271,877 286,877 300,879 327,876 355,878 383,875 411,878 439,880 453,880 467,878 494,875 522,871 545,873 565,878 592,878 620,875 661,875 675,877 704,876 731,869 759,864 773,865 787,862 800,856 814,847 828,842 842,843 856,841 870,843 884,850 898,858 912,863 925,857 940,851 954,848 968,851 981,852 995,851 1009,847 1023,843 1037,842 1051,844 1065,844 1093,841 1107,843 1135,844 1150,843 1163,845 1177,856';
const stoD = '0,845 157,848 185,855 202,862 216,866 244,868 286,871 313,877 355,878 425,878 453,879 494,879 522,876 550,873 592,875 636,876 704,876 731,875 759,869 787,866 814,858 842,850 856,846 870,843 884,844 898,847 912,851 925,854 940,856 954,856 981,853 1009,851 1037,847 1065,844 1093,843 1163,844 1177,846';

function drawSto() {
    return between(stoK, stoD, '#9a9edc', '#dcb8cc') + hline(847, '#3030d0') + hline(873, '#3030d0')
        + line(stoD, '#e06060', 1, '3 3') + line(stoK, '#000');
}

const cci = '0,900 12,905 25,905 35,915 53,915 63,917 77,927 90,914 104,900 118,898 132,907 146,920 160,929 174,928 188,941 202,947 216,928 230,928 244,968 258,965 286,966 300,962 313,952 341,957 355,956 369,951 383,950 397,950 411,952 453,954 467,951 480,948 494,948 508,945 522,943 536,954 550,957 565,952 592,960 606,965 620,959 636,956 661,951 675,954 690,951 704,948 717,941 731,939 745,940 759,938 773,941 787,942 801,925 814,921 828,915 856,899 870,907 884,931 898,937 912,928 925,916 940,915 954,916 967,925 981,922 995,917 1009,916 1023,914 1037,912 1051,917 1065,905 1079,902 1093,895 1107,905 1121,905 1135,891 1148,898 1163,907 1177,896';

// keep only the part of the curve beyond a level
function clampTo(str, fn, level) {
    return pts(str).flatMap((p, i, all) => {
        const q = [[p[0], fn(p[1], level)]];
        const n = all[i + 1];
        if (n && (p[1] - level) * (n[1] - level) < 0) {
            q.push([p[0] + (n[0] - p[0]) * (level - p[1]) / (n[1] - p[1]), level]);
        }
        return q;
    }).join(' ');
}

function drawCci() {
    return between(clampTo(cci, Math.min, 915), 915, '#b99cb0', 'none')
        + between(clampTo(cci, Math.max, 949), 949, 'none', '#97c3b0')
        + hline(915, '#3030d0') + hline(949, '#3030d0') + line(cci, '#000');
}

// axis entries: [y, text, style]; a style starting with # is a boxed value in that colour
const panels = [
    {
        cls: 'kurs', top: 57, h: 618, title: 'Kurs', draw: drawKurs,
        quote: 'Bid : 9,05 Ask : 9,05 Jahr:+Hoch 9,91 +Tief 8,60',
        labels: [[120, 119, '10,041 (100,00%)'], [119, 313, '9,3226 (61,80%)'], [119, 373, '9,1006 (50,00%)'], [119, 433, '8,8787 (38,20%)'], [119, 507, '8,604 (23,60%)'], [119, 627, '8,1601 (0,00%)'], [0, 428, '8,8957'], [1, 672, '© IT-Finance.com'], [91, 672, 'Daten sind indikativ', 'it']],
        axis: [[79, '10,2'], [132, '10', 'b'], [186, '9,8'], [294, '9,4'], [348, '9,2'], [401, '9', 'b'], [510, '8,6'], [564, '8,4'], [618, '8,2'], [667, '8', 'b'],
            [240, '9,60', 'mark'], [315, '9,325', '#ff0033'], [322, '9,2967', '#ff0000'], [339, '9,2333', '#ff0000'], [364, '', '#000'], [368, '9,1267', '#ff0000'], [385, '9,0633', '#000'], [389, '9,05', 'price'],
            [414, '8,9567', '#008000'], [436, '', '#000'], [431, '8,8933', '#006000'], [450, '8,825', '#00ff00'], [475, '', '#000'], [472, '8,7395', '#009933'], [460, '8,7867', '#006000'], [554, '8,435', '#00ffff'], [586, '8,3198', '#8000c0']]
    },
    {
        cls: 'macd', top: 677, h: 50, title: 'MACD (12 26 9)', draw: drawMacd,
        axis: [[697, '0', 'b'], [719, '-0,2'], [686, '', '#000'], [688, '', '#000'], [692, '0,0463', '#50d050']]
    },
    {
        cls: 'momentum', top: 729, h: 52, title: 'Momentum (12)', draw: drawMomentum,
        axis: [[752, '0', 'b'], [768, '-0,5'], [739, '0,42', '#e06060']]
    },
    {
        cls: 'rsi', top: 783, h: 51, title: 'Relative Strength Index (RSI) (14)', draw: drawRsi,
        axis: [[789, '100', 'b'], [809, '50'], [827, '0', 'b'], [801, '66,023', '#000']]
    },
    {
        cls: 'stochastik', top: 836, h: 48, title: 'Geglätteter Stochastik (14 3 5)', draw: drawSto,
        axis: [[877, '0', 'b'], [846, '83,051', '#e06060'], [856, '60,481', '#000']]
    },
    {
        cls: 'cci', top: 886, h: 87, title: 'Commodity Channel Index (20)', draw: drawCci,
        axis: [[915, '100'], [931, '0', 'b'], [949, '-100'], [966, '-200'], [896, '208,16', '#000']]
    }
];

function axisEntry([y, text, style = '']) {
    const boxed = style[0] === '#' || style === 'mark' || style === 'price';
    if (!boxed) {
        return `<path d="M0 ${y + 0.5}H4" stroke="#6b8a96"/><text class="${style}" x="5" y="${y + 4}">${text}</text>`;
    }
    const w = text.length === 5 ? 29 : text.length === 4 ? 23 : 35;
    const fill = { mark: '#ffff00', price: '#ffd800' }[style] || '#eef4ff';
    const border = style === 'mark' ? '#000' : '#6b8a96';
    const color = style[0] === '#' ? style : '#000';
    return `<rect x="4.5" y="${y - 7.5}" width="${w}" height="15" fill="${fill}" stroke="${border}"/><text x="5" y="${y + 4}" fill="${color}">${text}</text>`;
}

function minorTicks(p) {
    if (p.cls !== 'kurs') return '';
    let d = '';
    for (let y = 106; y < 670; y += 54) d += `M0 ${y + 0.5}H2`;
    return `<path d="${d}" stroke="#6b8a96"/>`;
}

document.getElementById('charts').innerHTML = panels.map(p => {
    const labels = (p.labels || []).map(([x, y, t, c]) =>
        `<text x="${x}" y="${y - p.top - 1}" ${c === 'it' ? 'font-style="italic"' : ''}>${t}</text>`).join('');
    return `<section class="row">
        <div class="plot ${p.cls}">
            <svg class="canvas" viewBox="0 ${p.top + 1} ${PLOT_W} ${p.h - 2}" preserveAspectRatio="none" shape-rendering="crispEdges">
                ${p.draw()}<path d="M411.5 ${p.top}v${p.h}" stroke="${CURSOR}"/>
            </svg>
            <svg class="labels">${labels}</svg>
            <div class="panel-head">
                <div class="panel-title"><h2>${p.title}</h2><svg><use href="#i-wrench"/></svg><svg><use href="#i-window"/></svg><svg><use href="#i-close"/></svg></div>
                <span class="quote">${p.quote || 'Bid : 9,05 Ask : 9,05'}</span>
            </div>
        </div>
        <div class="axis"><svg width="49" height="${p.h}" viewBox="0 ${p.top} 49 ${p.h}" shape-rendering="crispEdges">${minorTicks(p)}${p.axis.map(axisEntry).join('')}</svg></div>
    </section>`;
}).join('');

// Date axis, placed in percent so it follows the plot width
const dates = [[34, '13'], [62, '17'], [90, '19'], [117, '21'], [146, '25'], [174, '27'], [202, 'Okt'], [230, '03'], [258, '05'], [285, '09'], [312, '11'], [341, '15'], [368, '17'], [452, '25'], [480, '29'], [522, 'Nov'], [564, '06'], [591, '08'], [618, '12'], [646, '14'], [674, '16'], [702, '20'], [731, '22'], [759, '26'], [787, '28'], [828, 'Dez'], [869, '06'], [897, '10'], [925, '12'], [953, '14'], [981, '18'], [1009, '20'], [1037, '27'], [1065, '2013'], [1107, '07'], [1135, '09'], [1162, '11'], [1190, '15']];

function pct(x) {
    return (x / 12.27).toFixed(3) + '%';
}

document.getElementById('dates').innerHTML = dates.map(([x, t]) =>
    `<line x1="${pct(x)}" x2="${pct(x)}" y1="0" y2="3" stroke="#6b8a96"/><text x="${pct(x)}" y="14" text-anchor="middle" class="${t.length > 2 ? 'b' : ''}">${t}</text>`).join('')
    + `<svg x="${pct(411)}" overflow="visible"><rect x="-30.5" y="2.500" width="61" height="13" fill="#ffff00" stroke="#000"/><text x="0" y="13" text-anchor="middle">22 Okt 2012</text></svg>`;

const colors = ['#ffffff', '#cccccc', '#a8a8a8', '#808080', '#606060', '#000000', '#b8ccff', '#6699ff', '#40c0ff', '#0000ff', '#3030e0', '#0000a0', '#8000c0', '#ff80c0',
    '#e06060', '#ff0000', '#e03030', '#804000', '#ff8040', '#ff9080', '#ffc040', '#ffff00', '#40ffc0', '#80ff80', '#00ff00', '#50d050', '#30b030', '#008000'];
document.getElementById('palette').innerHTML = colors.map(c =>
    `<button type="button" aria-label="${c}" class="${c === '#000000' ? 'selected' : ''}" style="background-color:${c}"></button>`).join('');
```
